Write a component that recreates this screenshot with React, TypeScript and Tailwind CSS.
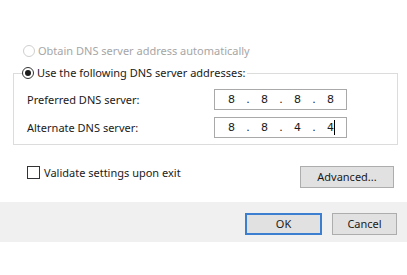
import React from "react";

const font = { fontFamily: '"Noto Sans", "Segoe UI", sans-serif' };

function IpBox({ octets, cursor }: { octets: string[]; cursor?: boolean }) {
  return (
    <div className="flex h-[21px] w-[133px] items-center border border-[#a9a9a9] bg-white pl-[5px] text-[11px] text-[#1a1a1a]" style={{ fontFamily: '"DejaVu Sans", sans-serif' }}>
      {octets.map((o, i) => (
        <React.Fragment key={i}>
          <span className="relative flex w-[23px] justify-center">
            {o}
            {cursor && i === 3 ? <span className="absolute left-[15px] top-[0px] h-[15px] w-px bg-black" /> : null}
          </span>
          {i < 3 ? <span className="flex w-[10px] justify-center">.</span> : null}
        </React.Fragment>
      ))}
    </div>
  );
}

export default function App() {
  return (
    <div className="h-[275px] w-[407px] overflow-hidden bg-white text-[11px] leading-[16px] text-[#1a1a1a]" style={font}>
      <div className="pt-[43px]">
        <div className="flex h-[16px] items-center pl-[23px] text-[#a6a6a6]">
          <span className="box-border h-[12px] w-[12px] rounded-full border border-[#cfcfcf] bg-white" />
          <span className="ml-[3px]">Obtain DNS server address automatically</span>
        </div>
        <fieldset className="ml-[13px] mt-[6px] w-[385px] border border-[#dcdcdc] px-0 pb-[6px] pt-0">
          <legend className="ml-[8px] flex h-[16px] items-center pr-[2px]">
            <span className="flex h-[12px] w-[12px] items-center justify-center rounded-full border border-[#333333] bg-white">
              <span className="h-[6px] w-[6px] rounded-full bg-[#1a1a1a]" />
            </span>
            <span className="ml-[3px]">Use the following DNS server addresses:</span>
          </legend>
          <div className="flex flex-col gap-[7px] pt-[8px]">
            <div className="flex h-[21px] items-center pl-[13px]">
              <span className="w-[187px]">Preferred DNS server:</span>
              <IpBox octets={["8", "8", "8", "8"]} />
            </div>
            <div className="flex h-[21px] items-center pl-[13px]">
              <span className="w-[187px]">Alternate DNS server:</span>
              <IpBox octets={["8", "8", "4", "4"]} cursor />
            </div>
          </div>
        </fieldset>
        <div className="mt-[21px] flex items-start pl-[27px] pr-[13px]">
          <div className="flex h-[13px] items-center">
            <span className="box-border h-[13px] w-[13px] border border-[#333333] bg-white" />
            <span className="ml-[4px]">Validate settings upon exit</span>
          </div>
          <button className="ml-auto h-[22px] w-[94px] border border-[#adadad] bg-[#e1e1e1] text-[11px] text-[#1a1a1a]">Advanced...</button>
        </div>
        <div className="mt-[14px] flex h-[40px] gap-[10px] bg-[#f0f0f0] pl-[245px] pt-[11px]">
          <button className="h-[22px] w-[77px] border-2 border-[#3c7fd1] bg-[#e1e1e1] text-[11px] text-[#1a1a1a]">OK</button>
          <button className="h-[22px] w-[65px] border border-[#adadad] bg-[#e1e1e1] text-[11px] text-[#1a1a1a]">Cancel</button>
        </div>
      </div>
    </div>
  );
}
